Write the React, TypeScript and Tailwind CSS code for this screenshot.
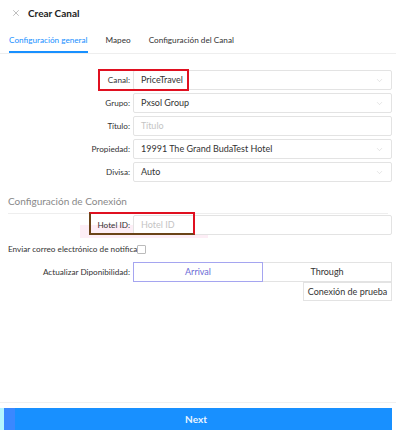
import { X, ChevronDown } from 'lucide-react'

const font = { fontFamily: 'Lato, "Open Sans", sans-serif' }

type Row = { label: string; value?: string; placeholder?: string; select?: boolean }

const rows: Row[] = [
  { label: 'Canal', value: 'PriceTravel', select: true },
  { label: 'Grupo', value: 'Pxsol Group', select: true },
  { label: 'Título', placeholder: 'Título' },
  { label: 'Propiedad', value: '19991 The Grand BudaTest Hotel', select: true },
  { label: 'Divisa', value: 'Auto', select: true },
]

function Field({ row }: { row: Row }) {
  return (
    <div className="flex items-center h-[20px] mb-[3px]">
      <div className="w-[133px] shrink-0 text-right pr-[3px] text-[8.2px] text-[#333]">{row.label}:</div>
      <div className="flex-1 h-[20px] border border-[#e3e3e3] rounded-[2px] flex items-center px-[7px]">
        <span className={`flex-1 text-[9px] ${row.value ? 'text-[#333]' : 'text-[#c4c4c4]'}`}>
          {row.value ?? row.placeholder}
        </span>
        {row.select && <ChevronDown size={9} strokeWidth={1.2} className="text-[#c8c8c8]" />}
      </div>
    </div>
  )
}

export default function App() {
  return (
    <div style={font} className="relative w-[396px] h-[436px] bg-white flex flex-col overflow-hidden">
      <div className="flex items-center h-[24px] pl-[11px] pt-[2px]">
        <X size={10} strokeWidth={1.3} className="text-[#888]" />
        <span className="ml-[7px] text-[10px] font-bold text-[#222]">Crear Canal</span>
      </div>

      <div className="mt-[9px] flex items-end h-[21px] border-b border-[#eeeeee] pl-[9px] text-[8.2px] text-[#333]">
        <div className="h-full flex flex-col justify-between">
          <span className="text-[#1890ff] leading-[14px]">Configuración general</span>
          <div className="h-[2px] bg-[#1890ff]" />
        </div>
        <div className="h-full ml-[18px] leading-[14px]">Mapeo</div>
        <div className="h-full ml-[18px] leading-[14px]">Configuración del Canal</div>
      </div>

      <div className="relative pt-[16px] pr-[4px]">
        {rows.map(r => (
          <Field key={r.label} row={r} />
        ))}
        <div className="absolute left-[98px] top-[15px] w-[91px] h-[22px] border-2 border-[#e01020]" />
      </div>

      <div className="mt-[9px] mx-[8px] pb-[4px] border-b border-[#eeeeee] text-[10px] text-[#888]">
        Configuración de Conexión
      </div>

      <div className="relative mt-[1px] pr-[4px]">
        <div className="absolute left-[80px] top-[10px] w-[128px] h-[13px] bg-[#fdeef6]" />
        <div className="relative flex items-center h-[20px]">
          <div className="w-[133px] shrink-0 text-right pr-[3px] text-[8.2px] text-[#333]">Hotel ID:</div>
          <div className="flex-1 h-[20px] border border-[#e3e3e3] rounded-[2px] flex items-center px-[7px] bg-white">
            <span className="text-[9px] text-[#c4c4c4]">Hotel ID</span>
          </div>
        </div>
        <div className="absolute left-[89px] top-[-3px] w-[106px] h-[23px] border-2 border-t-[#e01020] border-r-[#e01020] border-l-[#6b4418] border-b-[#6b4418]" />
      </div>

      <div className="mt-[7px] flex items-center h-[14px] pl-[8px]">
        <span className="w-[129px] overflow-hidden whitespace-nowrap text-[8.2px] text-[#333]">
          Enviar correo electrónico de notificación
        </span>
        <div className="w-[9px] h-[9px] border border-[#bbb] rounded-[1px] bg-white" />
      </div>

      <div className="mt-[6px] flex items-center h-[20px] pr-[4px]">
        <div className="w-[133px] shrink-0 text-right pr-[3px] text-[8.2px] text-[#333]">Actualizar Diponibilidad:</div>
        <div className="flex-1 flex h-[20px]">
          <div className="flex-1 border border-[#a5a5f0] flex items-center justify-center text-[9px] text-[#6b6bd6]">Arrival</div>
          <div className="flex-1 border border-l-0 border-[#e3e3e3] flex items-center justify-center text-[9px] text-[#333]">Through</div>
        </div>
      </div>

      <div className="flex justify-end pr-[4px]">
        <div className="w-[89px] h-[19px] border border-[#e3e3e3] flex items-center justify-center text-[9px] text-[#333]">
          Conexión de prueba
        </div>
      </div>

      <div className="flex-1" />
      <div className="border-t border-[#f0f0f0] pt-[5px] pb-[6px] pr-[4px] flex">
        <div className="w-[4px] h-[22px] bg-[#b4f4ff]" />
        <div className="w-[11px] h-[22px] bg-[#3a88ff]" />
        <div className="flex-1 h-[22px] bg-[#1890ff] flex items-center justify-center pr-[15px] text-[10px] font-bold text-[#e8f4ff]">
          Next
        </div>
      </div>
    </div>
  )
}
